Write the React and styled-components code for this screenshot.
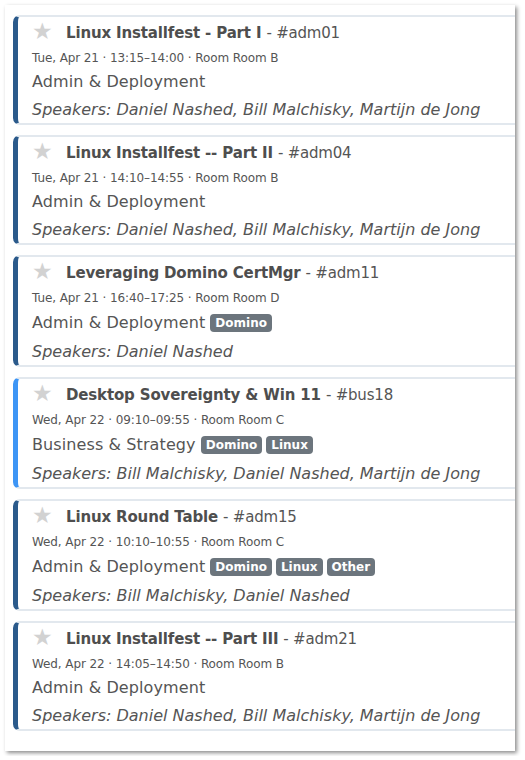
import React from 'react';
import styled, { createGlobalStyle } from 'styled-components';

const GlobalStyle = createGlobalStyle`
  body {
    margin: 0;
    background: #ffffff;
    font-family: "DejaVu Sans", "Open Sans", sans-serif;
  }
`;

const sessions = [
  {
    title: 'Linux Installfest - Part I',
    code: '#adm01',
    when: 'Tue, Apr 21 · 13:15–14:00 · Room Room B',
    track: 'Admin & Deployment',
    tags: [],
    speakers: 'Daniel Nashed, Bill Malchisky, Martijn de Jong',
    color: '#2b5a8b',
  },
  {
    title: 'Linux Installfest -- Part II',
    code: '#adm04',
    when: 'Tue, Apr 21 · 14:10–14:55 · Room Room B',
    track: 'Admin & Deployment',
    tags: [],
    speakers: 'Daniel Nashed, Bill Malchisky, Martijn de Jong',
    color: '#2b5a8b',
  },
  {
    title: 'Leveraging Domino CertMgr',
    code: '#adm11',
    when: 'Tue, Apr 21 · 16:40–17:25 · Room Room D',
    track: 'Admin & Deployment',
    tags: ['Domino'],
    speakers: 'Daniel Nashed',
    color: '#2b5a8b',
  },
  {
    title: 'Desktop Sovereignty & Win 11',
    code: '#bus18',
    when: 'Wed, Apr 22 · 09:10–09:55 · Room Room C',
    track: 'Business & Strategy',
    tags: ['Domino', 'Linux'],
    speakers: 'Bill Malchisky, Daniel Nashed, Martijn de Jong',
    color: '#3d95f5',
  },
  {
    title: 'Linux Round Table',
    code: '#adm15',
    when: 'Wed, Apr 22 · 10:10–10:55 · Room Room C',
    track: 'Admin & Deployment',
    tags: ['Domino', 'Linux', 'Other'],
    speakers: 'Bill Malchisky, Daniel Nashed',
    color: '#2b5a8b',
  },
  {
    title: 'Linux Installfest -- Part III',
    code: '#adm21',
    when: 'Wed, Apr 22 · 14:05–14:50 · Room Room B',
    track: 'Admin & Deployment',
    tags: [],
    speakers: 'Daniel Nashed, Bill Malchisky, Martijn de Jong',
    color: '#2b5a8b',
  },
];

const Panel = styled.div`
  margin: 5px;
  width: 510px;
  box-sizing: border-box;
  padding: 10px 0 20px 8px;
  background: #fff;
  box-shadow: 2px 2px 4px rgba(0, 0, 0, 0.45);
  display: flex;
  flex-direction: column;
  gap: 10px;
`;

const Card = styled.div`
  border-left: 5px solid ${p => p.$color};
  border-top: 2px solid #e2e8ee;
  border-bottom: 2px solid #e2e8ee;
  border-radius: 7px 0 0 7px;
  padding: 4px 0 1px 14px;
  color: #555;
`;

const TitleRow = styled.div`
  display: flex;
  align-items: center;
  height: 24px;
`;

const Star = styled.span`
  color: #d2d2d2;
  font-size: 23px;
  width: 34px;
  line-height: 24px;
  margin-top: -5px;
`;

const Title = styled.span`
  font-size: 15px;
  font-weight: bold;
  color: #4e4e4e;
  letter-spacing: -0.15px;
`;

const Code = styled.span`
  font-size: 15px;
  color: #555;
  margin-left: 5px;
  letter-spacing: -0.2px;
`;

const When = styled.div`
  font-size: 12px;
  line-height: 20px;
  margin-top: 3px;
  letter-spacing: -0.1px;
`;

const Track = styled.div`
  display: flex;
  align-items: center;
  gap: 4px;
  font-size: 16px;
  line-height: 24px;
  margin-top: 2px;
  padding: ${p => (p.$tagged ? '1px 0' : '0')};
  letter-spacing: 0.1px;
`;

const Tag = styled.span`
  background: #6c757d;
  color: #fff;
  font-size: 12px;
  font-weight: bold;
  line-height: 18px;
  padding: 0 5px;
  border-radius: 4px;
  letter-spacing: 0;
  &:first-of-type {
    margin-left: 1px;
  }
`;

const Speakers = styled.div`
  font-size: 16px;
  font-style: italic;
  line-height: 24px;
  margin-top: 4px;
`;

export default function App() {
  return (
    <>
      <GlobalStyle />
      <Panel>
        {sessions.map(s => (
          <Card key={s.code} $color={s.color}>
            <TitleRow>
              <Star>★</Star>
              <Title>{s.title}</Title>
              <Code>- {s.code}</Code>
            </TitleRow>
            <When>{s.when}</When>
            <Track $tagged={s.tags.length > 0}>
              {s.track}
              {s.tags.map(t => (
                <Tag key={t}>{t}</Tag>
              ))}
            </Track>
            <Speakers>Speakers: {s.speakers}</Speakers>
          </Card>
        ))}
      </Panel>
    </>
  );
}
